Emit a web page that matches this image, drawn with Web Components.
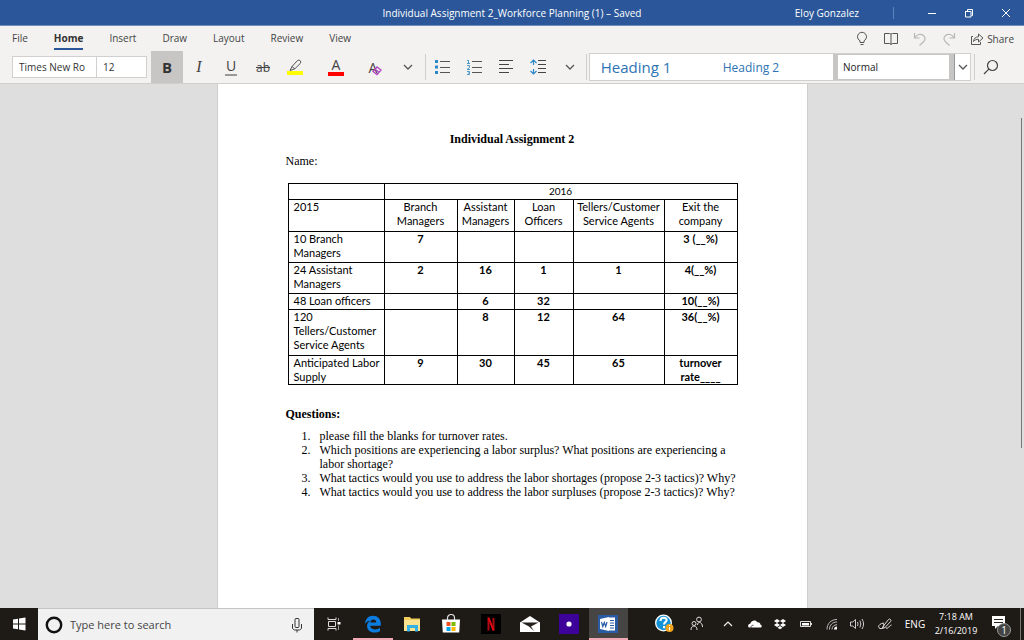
<!DOCTYPE html>
<html lang="en">
<head>
<meta charset="utf-8">
<title>Individual Assignment 2_Workforce Planning (1) – Saved</title>
<style>
html, body { margin: 0; }
body { font-family: "Open Sans", "Noto Sans", sans-serif; font-size: 10px; color: #444; }
</style>
</head>
<body>
<word-window>
  <title-bar slot="top" user="Eloy Gonzalez">Individual Assignment 2_Workforce Planning (1) – Saved</title-bar>
  <ribbon-tabs slot="top"></ribbon-tabs>
  <ribbon-tools slot="top"></ribbon-tools>
  <doc-page></doc-page>
  <task-bar slot="bottom"></task-bar>
</word-window>

<script>
const ICONS = {
  min: [10, 10, '<path d="M1 5.5h8" stroke="#fff"/>'],
  restore: [10, 10, '<path d="M1 3.5h6v5.500H1.500V3.500M3.500 3V1.500h5v6H7.500" fill="none" stroke="#fff"/>'],
  close: [10, 10, '<path d="M1 1l8 8M9 1l-8 8" stroke="#fff" fill="none"/>'],
  bulb: [12, 16, '<path d="M4 11.500V9.800C2.500 8.800 1.500 7.400 1.500 5.800a4.500 4.500 0 0 1 9 0c0 1.600-1 3-2.500 4v1.700zM4.500 13.500h3" fill="none" stroke="#555"/>'],
  book: [14, 14, '<path d="M7 2v11M.5 1.500h5q1 0 1.500.8q.5-.8 1.500-.8h5v10h-5q-1 0-1.500.9q-.5-.9-1.500-.9h-5z" fill="none" stroke="#555"/>'],
  undo: [14, 14, '<path d="M1.500 1v5h5M1.800 5.800C4 2.500 7.500 1.300 10.200 3.200c2.500 1.900 2.300 4.600.3 6.600L6.500 13.500" fill="none" stroke="#b8b8b8" stroke-width="1.200"/>'],
  redo: [14, 14, '<path d="M12.500 1v5h-5M12.200 5.800C10 2.500 6.500 1.300 3.800 3.200c-2.500 1.900-2.300 4.600-.3 6.600L7.500 13.500" fill="none" stroke="#b8b8b8" stroke-width="1.200"/>'],
  share: [14, 14, '<path d="M3 4.500H1.500v8h9V10M3.500 9.500c.3-3 2.200-4.700 5-4.700V2l4.500 4-4.500 4V7.300c-2 0-3.600.6-5 2.200z" fill="none" stroke="#555"/>'],
  highlight: [18, 18, '<path d="M1 13h16v4H1z" fill="#ff0"/><path d="M6 8.500l5.500-6q1.500-1 2.700.2t.2 2.600l-5.600 5.500zM6 8.500l-2 4 4.800-1.700" fill="none" stroke="#555"/>'],
  clear: [18, 18, '<path d="M8 13.500l4-4.500 4 3-4 4.500zM10 11.200l4 3" fill="none" stroke="#b146c2" stroke-width="1.300"/>'],
  chev: [10, 10, '<path d="M1 3l4 4 4-4" fill="none" stroke="#555" stroke-width="1.300"/>'],
  bullets: [16, 16, '<path d="M1 1h3v3H1zM1 6.500h3v3H1zM1 12h3v3H1z" fill="#2b88c8"/><path d="M6 2.500h10M6 8.500h10M6 13.500h10" stroke="#555"/>'],
  numbers: [16, 16, '<path d="M1 1.500h1.500v3M1 4.500h3M1 6.500h2.500v2L1 10.500h3M1 12.500h2.500v3H1M2 14h1.500" fill="none" stroke="#4a9ac9"/><path d="M6 2.500h10M6 8.500h10M6 13.500h10" stroke="#555"/>'],
  align: [16, 16, '<path d="M1 1.500h14M1 5.500h10M1 13.500h10" stroke="#444"/><path d="M1 9.500h14" stroke="#444"/>'],
  spacing: [18, 16, '<path d="M4.500 6V1M1.500 4l3-3 3 3M4.500 10v5M1.500 12l3 3 3-3" fill="none" stroke="#2b88c8" stroke-width="1.200"/><path d="M9 1.500h8M9 5.500h8M9 9.500h8M9 13.500h8" stroke="#444"/>'],
  search: [16, 16, '<circle cx="9.500" cy="6.500" r="5" fill="none" stroke="#444" stroke-width="1.200"/><path d="M5.800 10.200L1 15" stroke="#444" stroke-width="1.200"/>'],
  win: [14, 14, '<path d="M1 2.500l5-.8V6.500H1zM7 1.500L13.500.6v5.900H7zM1 7.500h5v4.800l-5-.8zM7 7.500h6.500v5.900L7 12.500z" fill="#fff"/>'],
  cortana: [18, 18, '<circle cx="9" cy="9" r="7.200" fill="none" stroke="#111" stroke-width="2.400"/>'],
  mic: [12, 16, '<rect x="4" y="1.500" width="4" height="9" rx="1" fill="none" stroke="#333"/><path d="M1.500 7v4.500l2 1.500h5l2-1.500V7M6 13v2.500" fill="none" stroke="#333"/>'],
  taskview: [16, 14, '<path d="M2 .5v2h8v-2M2 13.500v-2h8v2M2.500 4.500h7v5h-7z" fill="none" stroke="#ddd"/><path d="M12.500 1v3M12.500 8.500v4.500" stroke="#999"/><path d="M11.500 5h3v2.500h-3z" fill="#fff"/>'],
  edge: [18, 18, '<path d="M1 9C1.200 3.800 4.400.7 9 .7c4.800 0 7.800 3.300 7.800 8v2H6.200c.2 2.600 2.500 3.700 5 3.700 1.900 0 3.400-.5 4.800-1.400v3.300c-1.600.9-3.300 1.300-5.400 1.300-4.700 0-7.500-2.600-7.500-6.500 0-2.400 1.300-4.500 3.400-5.600C3.600 5.900 2 7 1 9zm5.300-1.400h5.900c0-2-1-3-2.800-3-1.700 0-2.800 1.200-3.100 3z" fill="#0b7de0"/>'],
  folder: [18, 16, '<path d="M1 1h6l1 1.500h9V15H1z" fill="#f4cf5e"/><path d="M1 4h16v11H1z" fill="#fde390"/><path d="M4 9h11v6.500h-3V12H7v3.500H4z" fill="#37b2e8"/>'],
  store: [20, 20, '<path d="M6.500 6V4a3.500 3.500 0 0 1 7 0v2" fill="none" stroke="#ddd" stroke-width="1.200"/><path d="M1 5.500h18l-.8 13H1.800z" fill="#fff"/><path d="M5.500 8h4v4h-4z" fill="#f25022"/><path d="M10.500 8h4v4h-4z" fill="#7fba00"/><path d="M5.500 13h4v4h-4z" fill="#00a4ef"/><path d="M10.500 13h4v4h-4z" fill="#ffb900"/>'],
  netflix: [20, 20, '<path d="M0 0h20v20H0z" fill="#000"/><path d="M7.500 4v12.500M12.500 4v12.500" stroke="#b10913" stroke-width="2"/><path d="M6.500 3.500h2l5 13h-2z" fill="#e50914"/>'],
  mail: [20, 18, '<path d="M0 7.500L10 1l10 6.500V17H0z" fill="#fff"/><path d="M1.500 7.500h17L11 11.500l3 4.500-5-4.500z" fill="#25211d"/>'],
  purple: [20, 20, '<path d="M0 0h20v20H0z" fill="#3d0299"/><circle cx="10" cy="10" r="2.600" fill="#fff"/>'],
  word: [20, 20, '<path d="M0 1h20v18H0z" fill="#2b5ba3"/><path d="M10 3.500h7v13h-7zM2 5l9-2v14l-9-2z" fill="#fff"/><path d="M12 6.500h4M12 9h4M12 11.500h4M12 14h4" stroke="#2b5ba3"/><path d="M3.500 8l1.300 4.500L6.300 8.500l1.400 4L9 8" fill="none" stroke="#2b5ba3" stroke-width="1.200"/>'],
  help: [20, 20, '<circle cx="9.500" cy="9" r="8.500" fill="#fff"/><circle cx="9.500" cy="9" r="7.200" fill="#1494d6"/><path d="M6.500 7c0-4.500 6.500-4 6.200-.8-.2 2-2.700 2-2.700 4.300M10 12v2.200" fill="none" stroke="#fff" stroke-width="2"/><circle cx="15.500" cy="14" r="4" fill="#f2a51d"/><path d="M15.500 13v3.300M15.500 11v1" stroke="#fff"/>'],
  people: [16, 16, '<circle cx="5" cy="7.500" r="2" fill="none" stroke="#ddd"/><circle cx="10" cy="3.500" r="2.400" fill="none" stroke="#ddd"/><path d="M2 14c0-2.500 1-4 3-4s3 1.500 3 4M8.500 9C8.500 7.500 9 6.500 10.500 6.500S13.500 8 13.500 11" fill="none" stroke="#ddd"/>'],
  up: [12, 12, '<path d="M2 8l4-4 4 4" fill="none" stroke="#eee" stroke-width="1.200"/>'],
  cloud: [16, 12, '<path d="M2 9.500C.5 8.500 1 6 3.200 5.800 4 2.500 8.500 1 10.300 4.200c2-.3 3 .8 3 2.200 2 .4 1.800 3.100.2 3.100z" fill="#fff"/><path d="M4 9.800c-.3-2 1.300-2.800 2.500-2.500" stroke="#25211d" fill="none" stroke-width=".8"/>'],
  dropbox: [14, 12, '<path d="M4 1l3 2-3 2-3-2zM10 1l3 2-3 2-3-2zM4 5l3 2-3 2-3-2zM10 5l3 2-3 2-3-2zM7 8l2.500 1.700L7 11.300 4.500 9.700z" fill="#fff"/>'],
  battery: [14, 10, '<path d="M1.500 2.500h10v5h-10zM12.500 4v2" fill="none" stroke="#ddd"/><path d="M3 4h7v2.500H3z" fill="#fff"/>'],
  wifi: [14, 14, '<path d="M2 12.500C2 6.500 6 2.500 12 2.500M4.500 12.500C4.500 8 7.500 5 12 5M7 12.500c0-2.800 2-4.800 5-4.800" fill="none" stroke="#bbb"/><path d="M9 12.500c0-2 1.300-3 3-3v3z" fill="#fff"/>'],
  sound: [16, 14, '<path d="M1.500 5h2.300L6.500 2.500v9L3.800 9H1.500zM8.500 5q1.200 2 0 4M10.800 3.500q2.200 3.500 0 7M13 2q3.200 5 0 10" fill="none" stroke="#ccc"/>'],
  pen: [16, 14, '<path d="M6 9.500L11.500 2.500q1.200-1 2 0t.1 2L8 10.500l-2.600 1zM7 6C2 6.500 0 10 3 11.500c3 1 5-3.500 3-5M8.500 10.500q1.500 2 3.200-.3T14.500 8" fill="none" stroke="#ddd"/>'],
  note: [18, 18, '<path d="M1 1h13v10H7l-3 3v-3H1z" fill="#fff"/><path d="M3 4.500h9M3 7.500h9" stroke="#25211d"/>']
};

class Base extends HTMLElement {
  constructor() {
    super();
    this.attachShadow({ mode: 'open' }).innerHTML =
      '<style>:host,*{box-sizing:border-box}button{font:inherit;color:inherit;background:none;border:0;padding:0;margin:0;display:flex;align-items:center;justify-content:center}' +
      this.constructor.css + '</style>' + this.constructor.html;
  }
}

customElements.define('ui-icon', class extends HTMLElement {
  connectedCallback() {
    if (this.shadowRoot) return;
    const [w, h, body] = ICONS[this.getAttribute('name')];
    this.attachShadow({ mode: 'open' }).innerHTML =
      `<style>:host{display:block;flex:none}svg{display:block}</style><svg width="${w}" height="${h}" viewBox="0 0 ${w} ${h}" aria-hidden="true">${body}</svg>`;
  }
});

customElements.define('word-window', class extends Base {
  static css = `
    :host{display:flex;flex-direction:column;min-height:100vh;background:#dedede}
    main{flex:1;display:flex;justify-content:center;position:relative}
    .scroll{position:absolute;right:2px;top:34px;height:330px;width:1px;background:#777}`;
  static html = `<slot name="top"></slot><main><slot></slot><div class="scroll"></div></main><slot name="bottom"></slot>`;
});

customElements.define('title-bar', class extends Base {
  static css = `
    :host{display:grid;grid-template-columns:1fr auto 1fr;height:26px;align-items:center;background:#2b579a;color:#fff;border-bottom:1px solid #6f8dbd}
    .title{grid-column:2}
    .right{display:flex;align-items:center;justify-content:flex-end}
    .user{padding-right:34px}
    .bar{width:1px;height:12px;background:#5b82ba;margin-right:19px}
    button{width:37px;height:25px}`;
  static html = `<span class="title"><slot></slot></span>
    <div class="right"><span class="user"></span><span class="bar"></span>
    <button aria-label="Minimize"><ui-icon name="min"></ui-icon></button>
    <button aria-label="Restore"><ui-icon name="restore"></ui-icon></button>
    <button aria-label="Close"><ui-icon name="close"></ui-icon></button></div>`;
  connectedCallback() { this.shadowRoot.querySelector('.user').textContent = this.getAttribute('user'); }
});

customElements.define('ribbon-tabs', class extends Base {
  static css = `
    :host{display:flex;justify-content:space-between;height:25px;background:#f3f2f1;padding:0 10px 0 12px}
    nav{display:flex;gap:26px}
    nav button{height:24px;border-bottom:2px solid transparent;padding-top:2px}
    nav .on{font-weight:bold;color:#333;border-color:#2b579a}
    .acts{display:flex;align-items:center}
    .acts button{width:29px;height:25px}
    .acts .share{width:auto;gap:3px;margin-left:7px}`;
  static html = `<nav aria-label="Ribbon"><button>File</button><button class="on">Home</button><button>Insert</button><button>Draw</button><button>Layout</button><button>Review</button><button>View</button></nav>
    <div class="acts"><button aria-label="Tell me"><ui-icon name="bulb"></ui-icon></button>
    <button aria-label="Read mode"><ui-icon name="book"></ui-icon></button>
    <button aria-label="Undo"><ui-icon name="undo"></ui-icon></button>
    <button aria-label="Redo"><ui-icon name="redo"></ui-icon></button>
    <button class="share"><ui-icon name="share"></ui-icon>Share</button></div>`;
});

customElements.define('ribbon-tools', class extends Base {
  static css = `
    :host{display:flex;height:33px;background:#f3f2f1;border-bottom:1px solid #cfcfcf;padding-left:12px}
    input{font:inherit;color:#333;height:22px;margin:5px 0 0;border:1px solid #d2d0ce;background:#fff;padding:0 6px;min-width:0}
    .face{width:85px}.size{width:50px;border-left:0;margin-right:4px}
    button{width:32px;height:32px;color:#444}
    .b{background:#c8c6c4;font-weight:bold;font-size:15px;color:#333}
    .i{font:italic 16px "Liberation Serif",serif}
    .u{font-size:14px}.u span{border-bottom:2px solid #999;line-height:16px;padding:0 1px}
    .s{font-size:12px;text-decoration:line-through}
    .hl{margin-right:5px}
    .wide{width:40px}
    .a span{display:block;font-size:14px;border-bottom:4px solid #f00;line-height:14px;padding:0 4px}
    .clear{font-size:14px}.clear ui-icon{margin-left:-12px}
    .more{width:24px;margin-right:5px}
    .sep{width:1px;height:26px;margin-top:3px;background:#d0cecc}
    .gallery{display:flex;flex:1;margin:2px 3px 0 2px;height:28px;background:#fff;border:1px solid #d2d0ce;max-width:382px}
    .gallery button{height:26px;width:auto}
    .gallery .h1{font-size:15px;color:#2e74b5;width:92px}
    .gallery .h2{font-size:12px;color:#2e74b5;width:138px}
    .gallery .normal{width:121px;margin-left:auto;border:solid #c8c6c4;border-width:1px 5px;color:#222;justify-content:flex-start;padding-left:5px}
    .gallery .drop{width:16px;border-left:1px solid #999}`;
  static html = `<input class="face" aria-label="Font" value="Times New Ro"><input class="size" aria-label="Font size" value="12">
    <button class="b">B</button><button class="i">I</button><button class="u"><span>U</span></button><button class="s">ab</button>
    <button class="hl" aria-label="Highlight"><ui-icon name="highlight"></ui-icon></button>
    <button class="wide a"><span>A</span></button><button class="wide clear">A<ui-icon name="clear"></ui-icon></button>
    <button class="more" aria-label="More font options"><ui-icon name="chev"></ui-icon></button><span class="sep"></span>
    <button aria-label="Bullets"><ui-icon name="bullets"></ui-icon></button><button aria-label="Numbering"><ui-icon name="numbers"></ui-icon></button>
    <button aria-label="Align"><ui-icon name="align"></ui-icon></button><button aria-label="Line spacing"><ui-icon name="spacing"></ui-icon></button>
    <button aria-label="More paragraph options"><ui-icon name="chev"></ui-icon></button><span class="sep"></span>
    <div class="gallery"><button class="h1">Heading 1</button><button class="h2">Heading 2</button><button class="normal">Normal</button><button class="drop" aria-label="More styles"><ui-icon name="chev"></ui-icon></button></div>
    <span class="sep"></span><button aria-label="Find"><ui-icon name="search"></ui-icon></button>`;
});

customElements.define('doc-page', class extends Base {
  static css = `
    :host{display:block;flex:0 1 591px;background:#fff;border-left:1px solid #cfcfcf;border-right:1px solid #cfcfcf;padding:48px 68px 0;font:12px/14px "Liberation Serif",serif;color:#000}
    h1,h2,p,ol{font-size:12px;margin:0}
    h1{text-align:center}
    p{margin:8px 0 15px}
    table{border-collapse:collapse;table-layout:fixed;width:450px;margin-left:2px;font:11px/14px Lato,sans-serif}
    th,td{border:1px solid #000;padding:0;vertical-align:top;text-align:center}
    th{font-weight:normal}
    td{font-weight:bold}
    tr>:first-child{text-align:left;padding-left:5px}
    .year{font-size:10px}
    h2{margin:22px 0 8px}
    ol{padding-left:28px}
    li{padding-left:6px}`;
  static html = `<h1>Individual Assignment 2</h1><p>Name:</p>
    <table><colgroup><col width="96"><col width="73"><col width="57"><col width="59"><col width="91"><col width="73"></colgroup>
    <tr height="16"><th></th><th class="year" colspan="5">2016</th></tr>
    <tr height="32"><th>2015</th><th>Branch Managers</th><th>Assistant Managers</th><th>Loan Officers</th><th>Tellers/Customer Service Agents</th><th>Exit the company</th></tr>
    <tr height="31"><th>10 Branch<br>Managers</th><td>7</td><td></td><td></td><td></td><td>3 (__%)</td></tr>
    <tr height="31"><th>24 Assistant<br>Managers</th><td>2</td><td>16</td><td>1</td><td>1</td><td>4(__%)</td></tr>
    <tr height="16"><th>48 Loan officers</th><td></td><td>6</td><td>32</td><td></td><td>10(__%)</td></tr>
    <tr height="46"><th>120<br>Tellers/Customer<br>Service Agents</th><td></td><td>8</td><td>12</td><td>64</td><td>36(__%)</td></tr>
    <tr height="28"><th>Anticipated Labor<br>Supply</th><td>9</td><td>30</td><td>45</td><td>65</td><td>turnover<br>rate____</td></tr></table>
    <h2>Questions:</h2>
    <ol><li>please fill the blanks for turnover rates.</li><li>Which positions are experiencing a labor surplus? What positions are experiencing a labor shortage?</li><li>What tactics would you use to address the labor shortages (propose 2-3 tactics)? Why?</li><li>What tactics would you use to address the labor surpluses (propose 2-3 tactics)? Why?</li></ol>`;
});

customElements.define('task-bar', class extends Base {
  static css = `
    :host{display:flex;height:32px;background:#1e1a16;color:#fff}
    .start{width:38px}
    .search{display:flex;align-items:center;width:276px;background:#f1f1f1;border-top:1px solid #c4c4c4;padding:0 11px 0 7px}
    input{flex:1;min-width:0;border:0;background:none;font:11px "Open Sans",sans-serif;padding:0 0 0 7px}
    input::placeholder{color:#444;opacity:1}
    .apps{display:grid;grid-template-columns:repeat(8,1fr);width:314px}
    .apps button{height:32px}
    .run{box-shadow:inset 0 -2px #f0a8b4}
    .on{background:#474543}
    .tray{margin-left:auto;margin-right:3px;padding-right:2px;border-right:1px solid #777;display:grid;grid-template-columns:32px 34px 28px 26px 24px 28px 24px 26px 30px 30px 52px 36px}
    .tray button{height:32px}
    .tray .clock{font-size:9px;line-height:14px;display:block;text-align:center}
    .n{position:relative}
    .badge{position:absolute;right:7px;top:15px;width:14px;height:14px;border-radius:50%;background:#444;border:1px solid #999;line-height:12px;text-align:center}`;
  static html = `<button class="start" aria-label="Start"><ui-icon name="win"></ui-icon></button>
    <div class="search"><ui-icon name="cortana"></ui-icon><input aria-label="Search" placeholder="Type here to search"><ui-icon name="mic"></ui-icon></div>
    <div class="apps"><button aria-label="Task view"><ui-icon name="taskview"></ui-icon></button><button class="run" aria-label="Edge"><ui-icon name="edge"></ui-icon></button><button aria-label="File Explorer"><ui-icon name="folder"></ui-icon></button><button aria-label="Store"><ui-icon name="store"></ui-icon></button><button aria-label="Netflix"><ui-icon name="netflix"></ui-icon></button><button aria-label="Mail"><ui-icon name="mail"></ui-icon></button><button aria-label="Recorder"><ui-icon name="purple"></ui-icon></button><button class="run on" aria-label="Word"><ui-icon name="word"></ui-icon></button></div>
    <div class="tray"><button aria-label="Help"><ui-icon name="help"></ui-icon></button><button aria-label="People"><ui-icon name="people"></ui-icon></button><button aria-label="Hidden icons"><ui-icon name="up"></ui-icon></button><button aria-label="OneDrive"><ui-icon name="cloud"></ui-icon></button><button aria-label="Dropbox"><ui-icon name="dropbox"></ui-icon></button><button aria-label="Battery"><ui-icon name="battery"></ui-icon></button><button aria-label="Wi-Fi"><ui-icon name="wifi"></ui-icon></button><button aria-label="Volume"><ui-icon name="sound"></ui-icon></button><button aria-label="Pen"><ui-icon name="pen"></ui-icon></button><button>ENG</button><button class="clock">7:18 AM<br>2/16/2019</button><button class="n" aria-label="Notifications"><ui-icon name="note"></ui-icon><span class="badge">1</span></button></div>`;
});
</script>
</body>
</html>
